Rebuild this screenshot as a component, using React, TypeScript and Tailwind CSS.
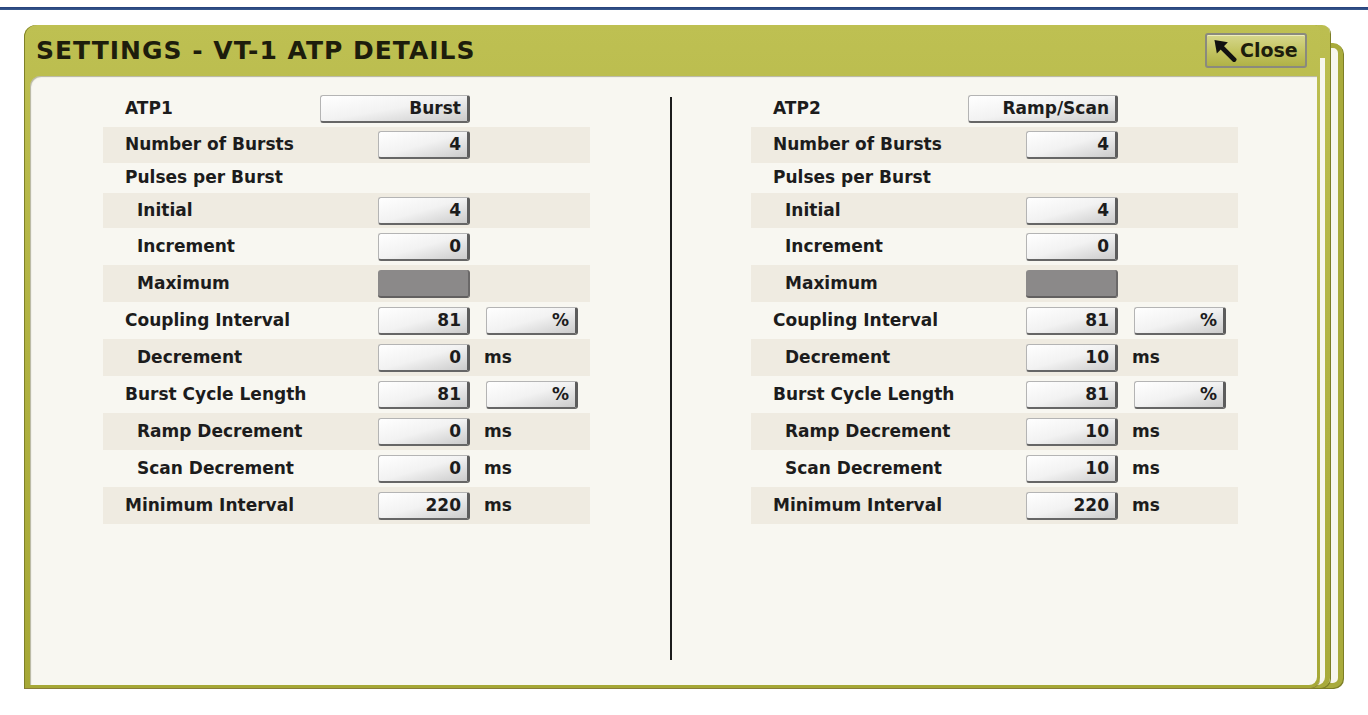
import React from "react";

type Cell =
  | { kind: "big"; text: string }
  | { kind: "num"; text: string }
  | { kind: "gray" };

type RowDef = {
  label: string;
  indent?: boolean;
  shaded?: boolean;
  h?: string;
  cell?: Cell;
  pct?: boolean;
  ms?: boolean;
};

function Btn({ text, w }: { text: string; w: string }) {
  return (
    <div
      className={`${w} h-[28px] shrink-0 flex items-center justify-end pr-[6px] rounded-[3px] border-t border-l border-t-[#b4b4b4] border-l-[#b4b4b4] border-r-[3px] border-b-[2px] border-r-[#5c5c5c] border-b-[#666666] bg-linear-to-br from-[#ffffff] via-[#f2f2f2] to-[#cbcbcb] text-[17px] font-bold text-[#1c1c1c] leading-none`}
    >
      {text}
    </div>
  );
}

function GrayBtn() {
  return (
    <div className="w-[92px] h-[28px] shrink-0 rounded-[3px] bg-[#8b8989] border-r-[2px] border-b-[2px] border-r-[#6a6868] border-b-[#626060]" />
  );
}

function Row({ r }: { r: RowDef }) {
  const labelW = r.cell && r.cell.kind === "big" ? "w-[217px]" : "w-[275px]";
  return (
    <div
      className={`flex items-center ${r.h ?? "h-[37px]"} ${
        r.shaded ? "bg-[#efebe1]" : ""
      }`}
    >
      <div
        className={`${labelW} shrink-0 ${
          r.indent ? "pl-[34px]" : "pl-[22px]"
        } text-[17px] font-bold text-[#1c1c1c] whitespace-nowrap`}
      >
        {r.label}
      </div>
      {r.cell && r.cell.kind === "big" && <Btn text={r.cell.text} w="w-[150px]" />}
      {r.cell && r.cell.kind === "num" && <Btn text={r.cell.text} w="w-[92px]" />}
      {r.cell && r.cell.kind === "gray" && <GrayBtn />}
      {r.pct && (
        <div className="ml-[16px]">
          <Btn text="%" w="w-[92px]" />
        </div>
      )}
      {r.ms && (
        <div className="ml-[14px] text-[17px] font-bold text-[#1c1c1c]">ms</div>
      )}
    </div>
  );
}

function Column({ rows }: { rows: RowDef[] }) {
  return (
    <div className="w-[487px] shrink-0 pt-[14px] flex flex-col">
      {rows.map((r, i) => (
        <Row key={i} r={r} />
      ))}
    </div>
  );
}

function makeRows(atp: string, mode: string, dec: string): RowDef[] {
  return [
    { label: atp, cell: { kind: "big", text: mode } },
    { label: "Number of Bursts", shaded: true, h: "h-[36px]", cell: { kind: "num", text: "4" } },
    { label: "Pulses per Burst", h: "h-[30px]" },
    { label: "Initial", indent: true, shaded: true, h: "h-[35px]", cell: { kind: "num", text: "4" } },
    { label: "Increment", indent: true, cell: { kind: "num", text: "0" } },
    { label: "Maximum", indent: true, shaded: true, cell: { kind: "gray" } },
    { label: "Coupling Interval", cell: { kind: "num", text: "81" }, pct: true },
    { label: "Decrement", indent: true, shaded: true, cell: { kind: "num", text: dec }, ms: true },
    { label: "Burst Cycle Length", cell: { kind: "num", text: "81" }, pct: true },
    { label: "Ramp Decrement", indent: true, shaded: true, cell: { kind: "num", text: dec }, ms: true },
    { label: "Scan Decrement", indent: true, cell: { kind: "num", text: dec }, ms: true },
    { label: "Minimum Interval", shaded: true, cell: { kind: "num", text: "220" }, ms: true },
  ];
}

function ArrowIcon() {
  return (
    <svg width="24" height="23" viewBox="0 0 24 24" className="shrink-0">
      <polygon points="1,1 15,3.5 3.5,15" fill="#111" />
      <line x1="7" y1="7" x2="21.5" y2="21.5" stroke="#111" strokeWidth="5" strokeLinecap="round" />
    </svg>
  );
}

export default function App() {
  return (
    <div className="relative w-[1368px] h-[715px] bg-white overflow-hidden font-['DejaVu_Sans',sans-serif]">
      <div className="h-[7px]" />
      <div className="h-[3px] bg-linear-to-b from-[#24407a] to-[#3a5a8e]" />

      {/* back windows */}
      <div className="absolute left-[1000px] top-[43px] w-[343px] h-[645px] bg-[#f7f6ee] border-[5px] border-[#a9ab3c] rounded-tr-[10px] rounded-br-[10px] shadow-[1px_1px_0_#7c7e26]" />
      <div className="absolute left-[1000px] top-[25px] w-[330px] h-[663px] flex flex-col pt-[33px] pr-[5px] pb-[3px] bg-linear-to-b from-[#bcbe50] to-[#a8aa3a] rounded-tr-[8px] rounded-br-[10px] shadow-[1px_1px_0_#7c7e26]">
        <div className="flex-1 bg-[#f7f6ee] rounded-br-[8px]" />
      </div>

      {/* main window */}
      <div className="relative z-10 mt-[15px] ml-[24px] w-[1296px] h-[663px] flex flex-col rounded-tl-[12px] rounded-tr-[6px] rounded-br-[10px] bg-linear-to-b from-[#bec052] via-[#b0b241] to-[#a6a836] shadow-[inset_1px_0_0_#7f8128,0_1px_0_#8a7c3a]">
        <div className="h-[51px] shrink-0 flex items-center justify-between pl-[12px] pr-[13px]">
          <div className="text-[25px] font-bold tracking-[1px] text-[#1d1d0c] leading-none">
            SETTINGS - VT-1 ATP DETAILS
          </div>
          <div className="w-[102px] h-[35px] flex items-center gap-[3px] pl-[6px] rounded-[3px] border-2 border-[#8a8a7e] bg-linear-to-b from-[#d6d78c] via-[#c4c562] to-[#b0b246] shadow-[inset_0_1px_0_#eeeebb]">
            <ArrowIcon />
            <span className="text-[19px] font-bold text-[#1d1d0c] leading-none">Close</span>
          </div>
        </div>
        <div className="flex-1 ml-[6px] mr-[3px] mb-[3px] bg-[#f8f7f1] rounded-tl-[10px] rounded-br-[8px] shadow-[inset_1px_1px_1px_rgba(60,60,10,0.35)] flex pl-[73px]">
          <Column rows={makeRows("ATP1", "Burst", "0")} />
          <div className="ml-[80px] mt-[21px] w-[2px] h-[563px] bg-[#1c1c1c] shrink-0" />
          <div className="ml-[79px]">
            <Column rows={makeRows("ATP2", "Ramp/Scan", "10")} />
          </div>
        </div>
      </div>
    </div>
  );
}
